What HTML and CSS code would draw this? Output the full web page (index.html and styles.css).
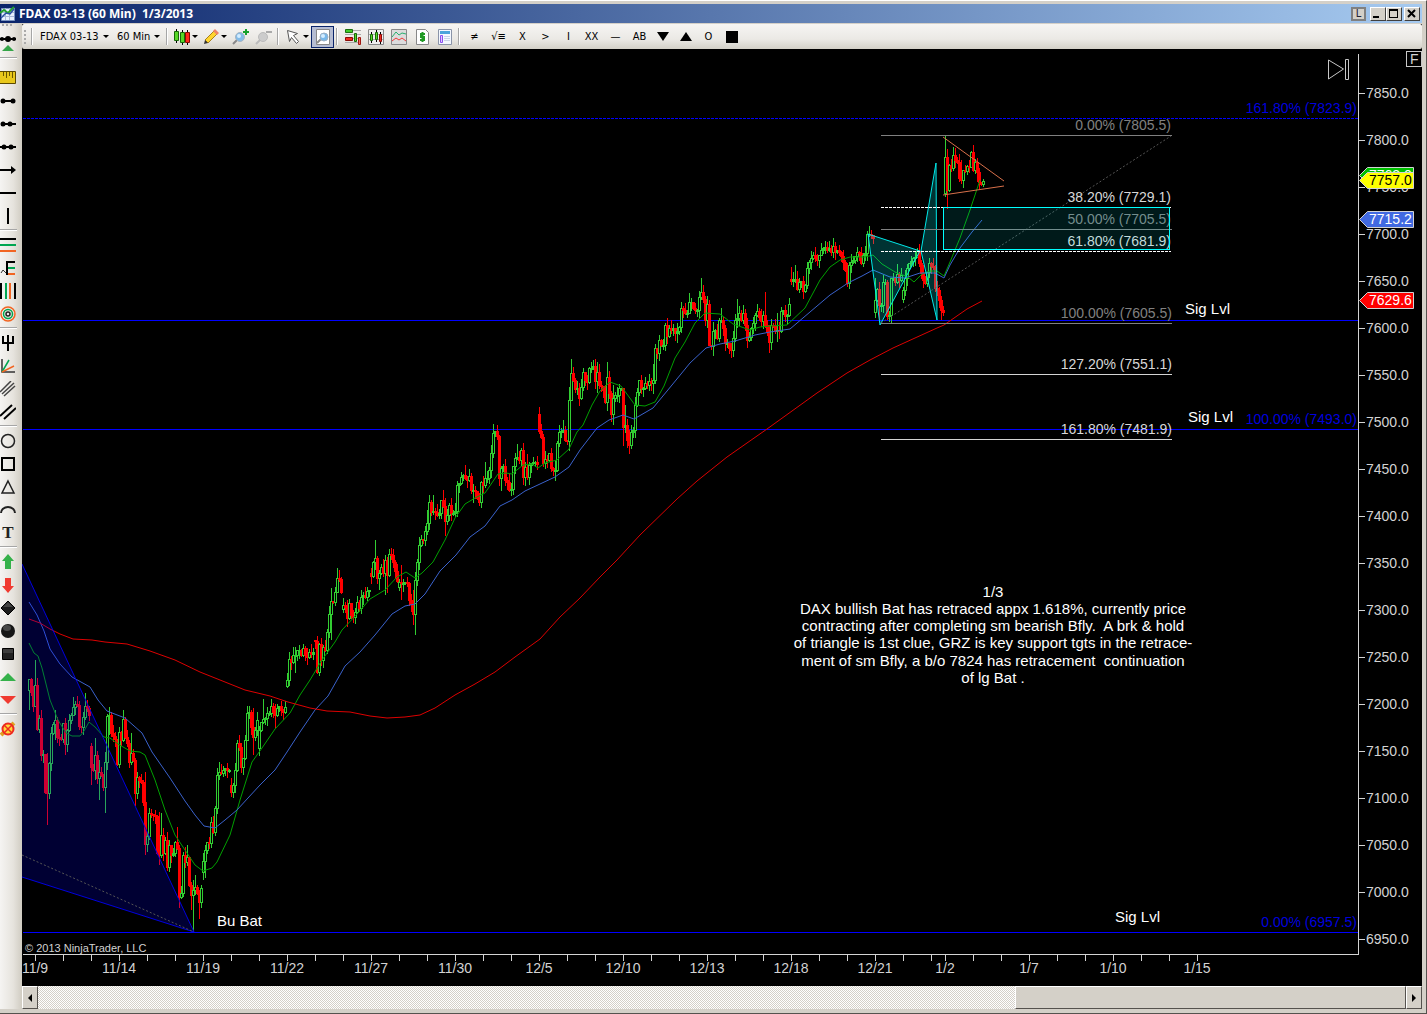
FILE: index.html
```html
<!DOCTYPE html>
<html lang="en">
<head>
  <meta charset="UTF-8" />
  <title>FDAX 03-13 (60 Min) 1/3/2013</title>
  <link rel="stylesheet" href="styles.css">
</head>
<body>
  <div class="window">
    <header class="titlebar">
      <svg class="app-icon" viewBox="0 0 16 16" width="16" height="16"><path fill="#e8f0ff" stroke="#7a94c0" d="M1.500 2.500h13v12h-13z"/><path stroke="#a8b8d8" fill="none" d="M1 6.500h13M1 10.500h13M5.500 2v12M9.500 2v12"/><path fill="none" stroke="#22a02c" stroke-width="2" d="M0 7l4-3 4 3 6-6"/><path fill="none" stroke="#2a4fa0" stroke-width="1.500" d="M1 12l5-5 4 1 4-5"/></svg>
      <h1>FDAX 03-13 (60 Min)&nbsp; 1/3/2013</h1>
      <div class="window-buttons">
        <button class="link-btn" aria-label="Link">L</button>
        <button aria-label="Minimize"><svg viewBox="0 0 12 10" width="12" height="10"><path d="M1 7h6v2H1z"/></svg></button>
        <button aria-label="Maximize"><svg viewBox="0 0 12 10" width="12" height="10"><path fill-rule="evenodd" d="M1 0h9v9H1zM2 2v6h7V2z"/></svg></button>
        <button class="close-btn" aria-label="Close"><svg viewBox="0 0 12 10" width="12" height="10"><path fill="none" stroke="#000" stroke-width="2" d="M2 1l7 7M9 1l-7 7"/></svg></button>
      </div>
    </header>

    <div class="workspace">
      <nav class="drawbar" aria-label="Drawing tools">
        <span class="grip-top"></span>
        <button class="more" aria-label="Scroll up"><svg viewBox="0 0 16 20" width="16" height="20"><path stroke="#000" stroke-width="2" d="M0 6h16"/><circle cx="8" cy="6" r="3"/><circle cx="2" cy="6" r="2"/><circle cx="14" cy="6" r="2"/><path fill="#35a548" d="M2 18l6-6 6 6z"/></svg></button>
        <hr>
        <button aria-label="Ruler"><svg viewBox="0 0 16 16" width="16" height="16"><path fill="#e9c81c" stroke="#5c4a00" d="M-1 1.500h16.500v12H-1z"/><path stroke="#6b5600" d="M3.500 2v4M6.500 2v6M9.500 2v4M12.500 2v6"/></svg></button>
        <button aria-label="Line"><svg viewBox="0 0 16 16" width="16" height="16"><path stroke="#000" stroke-width="2" d="M2 8h12"/><circle cx="3" cy="8" r="2.500"/><circle cx="13" cy="8" r="2.500"/></svg></button>
        <button aria-label="Ray"><svg viewBox="0 0 16 16" width="16" height="16"><path stroke="#000" stroke-width="2" d="M2 8h14"/><circle cx="3" cy="8" r="2.500"/><circle cx="10" cy="8" r="2.500"/></svg></button>
        <button aria-label="Extended line"><svg viewBox="0 0 16 16" width="16" height="16"><path stroke="#000" stroke-width="2" d="M0 8h16"/><circle cx="4" cy="8" r="2.500"/><circle cx="11" cy="8" r="2.500"/></svg></button>
        <button aria-label="Arrow line"><svg viewBox="0 0 16 16" width="16" height="16"><path stroke="#000" stroke-width="2" d="M0 8h13"/><path d="M11 4l5 4-5 4z"/></svg></button>
        <button aria-label="Horizontal line"><svg viewBox="0 0 16 16" width="16" height="16"><path d="M0 7h16v2H0z"/></svg></button>
        <button aria-label="Vertical line"><svg viewBox="0 0 16 16" width="16" height="16"><path d="M7 0h2v16H7z"/></svg></button>
        <hr>
        <button aria-label="Fibonacci retracements"><svg viewBox="0 0 16 16" width="16" height="16"><path d="M0 1h16v2H0z"/><path fill="#00a651" d="M0 7h16v2H0z"/><path fill="#f26522" d="M0 13h16v2H0z"/></svg></button>
        <button aria-label="Fibonacci extensions"><svg viewBox="0 0 16 16" width="16" height="16"><path fill="none" stroke="#333" d="M1 13l2-3 3 3"/><path d="M6 1h9v2H8v12H6z"/><path fill="#00a651" d="M8 7h7v2H8z"/><path fill="#f26522" d="M8 13h7v2H8z"/></svg></button>
        <button aria-label="Fibonacci time"><svg viewBox="0 0 16 16" width="16" height="16"><path d="M0 0h2v16H0zM14 0h2v16h-2z"/><path fill="#00a651" d="M5 0h2v16H5z"/><path fill="#f26522" d="M9 0h2v16H9z"/></svg></button>
        <button aria-label="Fibonacci circle"><svg viewBox="0 0 16 16" width="16" height="16" fill="none" stroke-width="1.500"><circle cx="8" cy="8" r="7" stroke="#f26522"/><circle cx="8" cy="8" r="4.500" stroke="#00a651"/><circle cx="8" cy="8" r="2" stroke="#222"/></svg></button>
        <hr>
        <button aria-label="Andrews pitchfork"><svg viewBox="0 0 16 16" width="16" height="16"><path d="M2 1h2v6h3V0h2v7h3V1h2v8H9v7H7V9H2z"/></svg></button>
        <button aria-label="Gann fan"><svg viewBox="0 0 16 16" width="16" height="16" fill="none" stroke-width="1.500"><path stroke="#333" d="M2 1v13h13"/><path stroke="#00a651" d="M2 14L9 2"/><path stroke="#f26522" d="M2 14l12-6"/></svg></button>
        <button aria-label="Regression channel"><svg viewBox="0 0 16 16" width="16" height="16"><path stroke="#444" stroke-width="1.500" d="M0 11L11 0M2 13L14 2M4 15L15 5"/></svg></button>
        <button aria-label="Trend channel"><svg viewBox="0 0 16 16" width="16" height="16"><path stroke="#000" stroke-width="2" d="M0 12L12 1M4 15L16 4"/></svg></button>
        <hr>
        <button aria-label="Ellipse"><svg viewBox="0 0 16 16" width="16" height="16"><circle cx="8" cy="8" r="6.500" fill="none" stroke="#222" stroke-width="1.500"/></svg></button>
        <button aria-label="Rectangle"><svg viewBox="0 0 16 16" width="16" height="16"><path fill="none" stroke="#000" stroke-width="2" d="M2 2h12v12H2z"/></svg></button>
        <button aria-label="Triangle"><svg viewBox="0 0 16 16" width="16" height="16"><path fill="none" stroke="#222" stroke-width="1.500" d="M8 2l6 12H2z"/></svg></button>
        <button aria-label="Arc"><svg viewBox="0 0 16 16" width="16" height="16"><path fill="none" stroke="#222" stroke-width="2" d="M1 11a7 6 0 0 1 14 0"/></svg></button>
        <button class="text-tool" aria-label="Text">T</button>
        <hr>
        <button aria-label="Arrow up"><svg viewBox="0 0 16 16" width="16" height="16"><path fill="#35b14a" d="M8 0l6 7h-3v8H5V7H2z"/></svg></button>
        <button aria-label="Arrow down"><svg viewBox="0 0 16 16" width="16" height="16"><path fill="#f03a30" d="M8 16l6-7h-3V1H5v8H2z"/></svg></button>
        <button aria-label="Diamond"><svg viewBox="0 0 16 16" width="16" height="16"><path fill="#1c1c1c" stroke="#000" d="M8 1l7 7-7 7-7-7z"/><path fill="#444" d="M8 2l5 5H3z"/></svg></button>
        <button aria-label="Dot"><svg viewBox="0 0 16 16" width="16" height="16"><circle cx="8" cy="8" r="7" fill="#161616"/><ellipse cx="7" cy="5" rx="4" ry="3" fill="#484848"/></svg></button>
        <button aria-label="Square"><svg viewBox="0 0 16 16" width="16" height="16"><path fill="#222" stroke="#000" d="M2.500 2.500h11v11h-11z"/><path fill="#3e3e3e" d="M3 3h10v4H3z"/></svg></button>
        <button aria-label="Triangle up"><svg viewBox="0 0 16 16" width="16" height="16"><path fill="#35b14a" d="M0 12l8-8 8 8z"/></svg></button>
        <button aria-label="Triangle down"><svg viewBox="0 0 16 16" width="16" height="16"><path fill="#f03a30" d="M0 4l8 8 8-8z"/></svg></button>
        <hr>
        <button aria-label="Remove drawings"><svg viewBox="0 0 16 16" width="16" height="16"><path stroke="#e0a020" stroke-width="4" d="M1 14L14 2"/><circle cx="8" cy="8" r="5.500" fill="#ffd83a" stroke="#ee2a20" stroke-width="2"/><path stroke="#ee2a20" stroke-width="1.500" d="M4 4l8 8M4 12l8-8"/></svg></button>
      </nav>

      <main class="chart-pane">
        <div class="toolbar">
          <span class="grip"></span>
          <span class="sep"></span>
          <label class="pick instrument"><select aria-label="Instrument"><option>FDAX 03-13</option></select></label>
          <label class="pick interval"><select aria-label="Interval"><option>60 Min</option></select></label>
          <span class="sep"></span>
          <button class="drop" aria-label="Chart style"><svg viewBox="0 0 16 16" width="16" height="16"><path stroke="#000" d="M2.500 0v14M8.500 1v15M13.500 1v15"/><path fill="#58d828" stroke="#176a08" d="M.5 2.500h4v9h-4zM6.500 3.500h4v10h-4z"/><path fill="#ff2a1c" stroke="#8a0a04" d="M11.500 3.500h4v10h-4z"/></svg></button>
          <button class="drop" aria-label="Drawing tools"><svg viewBox="0 0 16 16" width="16" height="16"><path fill="#ffd52e" stroke="#a8801a" d="M2 11L11 2l3 3-9 9z"/><path fill="#f0846a" d="M10 2l2-2 4 4-2 2z"/><path fill="#333" d="M1 15l1-4 3 3z"/></svg></button>
          <button aria-label="Zoom in"><svg viewBox="0 0 18 16" width="18" height="16"><path stroke="#888" stroke-width="2" d="M1 15l5-5"/><circle cx="8" cy="8" r="4.500" fill="#83bce8" stroke="#a8b4c0"/><circle cx="7" cy="7" r="2" fill="#d4edff"/><path fill="#16a02c" d="M13 0h2v2h2v2h-2v2h-2V4h-2V2h2z"/></svg></button>
          <button aria-label="Zoom out" disabled><svg viewBox="0 0 18 16" width="18" height="16"><path stroke="#bbb" stroke-width="2" d="M1 15l5-5"/><circle cx="8" cy="8" r="4.500" fill="#ccc" stroke="#bbb"/><path fill="#aaa" d="M11 2h6v2h-6z"/></svg></button>
          <span class="sep"></span>
          <button class="drop" aria-label="Pointer"><svg viewBox="0 0 16 16" width="16" height="16"><path fill="#fff" stroke="#555" d="M2.500 1.500l10 3-4 2 5 6-2 2-5-6-2 4z"/></svg></button>
          <button class="active" aria-label="Data box"><svg viewBox="0 0 16 16" width="16" height="16"><path fill="#fff" stroke="#888" d="M1.500.5h13v15h-13z"/><path stroke="#888" stroke-width="2" d="M2 14l4-4"/><circle cx="9" cy="8" r="4" fill="#78b8ea" stroke="#9ab0c4"/><circle cx="8" cy="7" r="2" fill="#d4edff"/></svg></button>
          <span class="sep"></span>
          <button aria-label="Chart trader"><svg viewBox="0 0 16 16" width="16" height="16"><path stroke="#aaa" d="M0 1.500h16M0 5.500h16M0 9.500h16M0 13.500h16"/><path fill="#3fca28" stroke="#1c7010" d="M.5.5h7v3h-7z"/><path fill="#f02a20" stroke="#8a0a04" d="M.5 8.500h7v3h-7z"/><path fill="#58d828" stroke="#176a08" d="M9.500 4.500h2v8h-2z"/><path fill="#f46a60" stroke="#a01810" d="M13.500 8.500h2v7h-2z"/></svg></button>
          <button aria-label="Data series"><svg viewBox="0 0 16 16" width="16" height="16"><path fill="#eee" stroke="#888" d="M.5.5h15v15H.5z"/><path stroke="#aaa" d="M1 5.500h14M1 10.500h14"/><path stroke="#000" d="M3.500 3v11M8.500 1v12M12.500 3v12"/><path fill="#58d828" stroke="#176a08" d="M2.500 5.500h2v6h-2zM7.500 3.500h2v7h-2z"/><path fill="#f02a20" stroke="#8a0a04" d="M11.500 5.500h2v7h-2z"/></svg></button>
          <button aria-label="Indicators"><svg viewBox="0 0 16 16" width="16" height="16"><path fill="#dcdcdc" stroke="#888" d="M.5.5h15v15H.5z"/><path fill="none" stroke="#28b070" d="M1 8l4-5 3 3 3-2 4 1"/><path fill="none" stroke="#f03a3a" d="M1 12l4-3 3 2 3-2 4 3"/></svg></button>
          <button aria-label="Strategies"><svg viewBox="0 0 16 16" width="16" height="16"><path fill="#fff" stroke="#888" d="M2.500.5h9l3 3v12h-12z"/><path fill="none" stroke="#219a24" stroke-width="2" d="M11 5H7v3h3v3H6M8.500 3v10"/></svg></button>
          <button aria-label="Properties"><svg viewBox="0 0 16 16" width="16" height="16"><path fill="#f4f8ff" stroke="#8a94a8" d="M1.500.5h13v15h-13z"/><path fill="#4aa4dc" d="M3 2h10v3H3z"/><path fill="#e0ccff" stroke="#8a50f0" d="M3.500 6.500h2v7h-2z"/><path stroke="#c8d4e8" d="M7 7.500h6M7 9.500h6M7 11.500h6"/></svg></button>
          <span class="sep"></span>
          <button>≠</button>
          <button class="wide">√≡</button>
          <button>X</button>
          <button>&gt;</button>
          <button>I</button>
          <button>XX</button>
          <button class="wide">—</button>
          <button>AB</button>
          <button aria-label="Triangle down marker"><svg viewBox="0 0 12 12" width="12" height="12"><path d="M0 1h12l-6 9z"/></svg></button>
          <button aria-label="Triangle up marker"><svg viewBox="0 0 12 12" width="12" height="12"><path d="M0 10h12L6 1z"/></svg></button>
          <button>O</button>
          <button aria-label="Square marker"><svg viewBox="0 0 12 12" width="12" height="12"><path d="M0 0h12v12H0z"/></svg></button>
        </div>

        <svg class="chart" viewBox="22 49 1400 937" role="img" aria-label="FDAX 60 minute price chart">
          <g class="crisp">
            <path class="level dashed" d="M23 118.500H1358"/>
            <path class="level" d="M23 320.500H1358M23 429.500H1358M23 932.500H1358"/>
          </g>

          <g id="candles" class="crisp"></g>
          <g id="averages"></g>

          <!-- large bat -->
          <polygon class="bat" points="22,564 194,932 22,877"/>
          <path class="bat-edge" d="M22 564L194 932L22 877"/>
          <path class="dotted" d="M22 855L194 932"/>

          <!-- small butterfly -->
          <polygon class="butterfly" points="868,234 880,325 920,251"/>
          <polygon class="butterfly" points="921,251 936,163 937,320"/>

          <!-- retracement of the butterfly -->
          <path class="dotted" d="M881 323L1171 136"/>
          <g class="crisp">
            <path class="fib dim" d="M881 135.500H1172M881 229.500H1172M881 323.500H1172"/>
            <path class="fib" d="M881 374.500H1172M881 439.500H1172"/>
            <path class="fib dash" d="M881 207.500H1171M881 251.500H1171"/>
          </g>
          <g class="fib-label">
            <text class="dim" x="1171" y="130">0.00% (7805.5)</text>
            <text x="1171" y="202">38.20% (7729.1)</text>
            <text class="dim" x="1171" y="224">50.00% (7705.5)</text>
            <text x="1171" y="246">61.80% (7681.9)</text>
            <text class="dim" x="1172" y="318">100.00% (7605.5)</text>
            <text x="1172" y="369">127.20% (7551.1)</text>
            <text x="1172" y="434">161.80% (7481.9)</text>
            <text class="blue" x="1357" y="113">161.80% (7823.9)</text>
            <text class="blue" x="1357" y="424">100.00% (7493.0)</text>
            <text class="blue" x="1357" y="927">0.00% (6957.5)</text>
          </g>
          <rect class="zone crisp" x="943.500" y="207.500" width="226" height="42"/>
          <path class="wedge" d="M943 137L1004 181M943 195L1004 186"/>

          <g class="note">
            <text x="1185" y="314">Sig Lvl</text>
            <text x="1188" y="422">Sig Lvl</text>
            <text x="1115" y="922">Sig Lvl</text>
            <text x="217" y="926">Bu Bat</text>
          </g>
          <g class="note centered">
            <text x="993" y="597">1/3</text>
            <text x="993" y="614">DAX bullish Bat has retraced appx 1.618%, currently price</text>
            <text x="993" y="631">contracting after completing sm bearish Bfly.&nbsp; A brk &amp; hold</text>
            <text x="993" y="648">of triangle is 1st clue, GRZ is key support tgts in the retrace-</text>
            <text x="993" y="666">ment of sm Bfly, a b/o 7824 has retracement&nbsp; continuation</text>
            <text x="993" y="683">of lg Bat .</text>
          </g>
          <text class="copyright" x="25" y="952">© 2013 NinjaTrader, LLC</text>

          <g id="axes"></g>
          <g id="tags"></g>

          <g class="marker" aria-label="Go to last bar">
            <path d="M1328.500 60v19l15-10zM1345.500 59.500h3v20h-3z"/>
          </g>
          <g class="marker">
            <rect class="crisp" x="1406.500" y="51.500" width="15" height="15"/>
            <text x="1410" y="64">F</text>
          </g>
        </svg>

        <div class="scrollbar">
          <button aria-label="Scroll left"><svg viewBox="0 0 8 8" width="8" height="8"><path d="M6 0v8L2 4z"/></svg></button>
          <div class="track"><div class="thumb"></div></div>
          <button aria-label="Scroll right"><svg viewBox="0 0 8 8" width="8" height="8"><path d="M2 0v8l4-4z"/></svg></button>
        </div>
      </main>
    </div>
  </div>
  <script src="chart.js"></script>
</body>
</html>
```
FILE: styles.css
```css
* {
  box-sizing: border-box;
}

body {
  margin: 0;
  background: #d4d0c8;
  font-family: "DejaVu Sans Condensed", "DejaVu Sans", sans-serif;
  font-size: 11px;
  color: #000;
}

button {
  margin: 0;
  padding: 0;
  border: 0;
  background: none;
  font: inherit;
  color: inherit;
}

svg {
  display: block;
}

.window {
  min-height: 100vh;
  display: flex;
  flex-direction: column;
  padding: 3px 4px 4px 0;
  border-top: 1px solid #fff;
  border-right: 1px solid #55524e;
  border-bottom: 1px solid #55524e;
  background: #d4d0c8;
}

/* title bar */
.titlebar {
  height: 19px;
  display: flex;
  align-items: center;
  gap: 3px;
  padding-right: 2px;
  background: linear-gradient(to right, #0a246a, #a6caf0);
  color: #fff;
}

.titlebar h1 {
  flex: 1;
  margin: 0;
  font-family: "Noto Sans", sans-serif;
  font-size: 12px;
  font-weight: 700;
}

.window-buttons {
  display: flex;
}

.window-buttons button {
  width: 16px;
  height: 14px;
  display: flex;
  align-items: center;
  justify-content: center;
  background: #d4d0c8;
  border: 1px solid;
  border-color: #fff #404040 #404040 #fff;
  color: #223;
}

.window-buttons .link-btn {
  width: 15px;
  margin-right: 4px;
  border: 2px solid #808080;
}

.window-buttons .close-btn {
  margin-left: 2px;
}

.workspace {
  flex: 1;
  display: flex;
  padding-top: 1px;
}

/* drawing tools */
.drawbar {
  width: 22px;
  flex: none;
  display: flex;
  flex-direction: column;
  padding-right: 5px;
  background: linear-gradient(to right, #f5f4f2, #e6e3dd 60%, #d0ccc2);
}

.drawbar button {
  width: 16px;
  height: 23px;
  display: flex;
  align-items: center;
}

.drawbar .more {
  height: 24px;
}

.drawbar hr {
  width: 17px;
  height: 2px;
  margin: 2px 0;
  border: 0;
  border-top: 1px solid #a6a6a6;
  background: #fff;
}

.drawbar .more + hr {
  margin: 2px 0 7px;
}

.drawbar .text-tool {
  justify-content: center;
  font: bold 17px "Liberation Serif", serif;
  color: #222;
}

.grip-top {
  height: 7px;
  margin-left: 2px;
  border-top: 2px dotted #aaa;
  width: 10px;
}

.chart-pane {
  flex: 1;
  min-width: 0;
  display: flex;
  flex-direction: column;
  background: #000;
}

/* toolbar */
.toolbar {
  height: 25px;
  display: flex;
  align-items: center;
  padding-left: 2px;
  background: linear-gradient(#f6f5f3, #ebe9e5 60%, #d3d0c7);
  border-radius: 2px;
}

.toolbar button {
  min-width: 23px;
  height: 22px;
  display: flex;
  align-items: center;
  justify-content: center;
}

.toolbar .active {
  background: #b6bdd2;
  border: 1px solid #0a246a;
}

.toolbar .wide {
  width: 25px;
}

.toolbar .drop {
  width: 29px;
  gap: 2px;
}

.drop::after,
.pick::after {
  content: "";
  border: 3px solid transparent;
  border-top-color: #000;
  border-bottom: 0;
}

.pick {
  display: flex;
  align-items: center;
}

.pick select {
  appearance: none;
  border: 0;
  padding: 0;
  background: none;
  font: inherit;
  color: #000;
}

.instrument {
  margin-left: 4px;
}

.instrument select {
  width: 63px;
}

.interval {
  margin: 0 4px 0 8px;
}

.interval select {
  width: 37px;
}

.sep {
  width: 2px;
  height: 17px;
  margin: 0 3px 0 2px;
  border-left: 1px solid #a6a6a6;
  background: #fff;
}

.grip {
  width: 5px;
  height: 14px;
  border-left: 2px dotted #aaa;
}

/* chart */
.chart {
  width: 100%;
  height: auto;
  background: #000;
  font-family: "Liberation Sans", Arial, sans-serif;
  font-size: 14px;
}

.crisp {
  shape-rendering: crispEdges;
}

.level {
  stroke: #0000ff;
}

.dashed {
  stroke-dasharray: 3 1;
}

.up {
  fill: #32cd32;
}

.down {
  fill: #ff0000;
}

.hollow {
  fill: #000;
}

.avg {
  fill: none;
}

.avg.fast {
  stroke: #00a000;
}

.avg.mid {
  stroke: #3a62cc;
}

.avg.slow {
  stroke: #dd0000;
}

.bat {
  fill: rgba(0, 0, 255, 0.2);
}

.bat-edge {
  fill: none;
  stroke: #0000dd;
}

.dotted {
  stroke: #555;
  stroke-dasharray: 2 2;
}

.butterfly {
  fill: rgba(0, 255, 255, 0.2);
  stroke: #00e8e8;
}

.fib {
  stroke: #d3d3d3;
}

.fib.dim {
  stroke: #808080;
}

.fib.dash {
  stroke: #fff;
  stroke-dasharray: 3 1;
}

.fib-label {
  fill: #d8d8d8;
  text-anchor: end;
}

.fib-label .dim {
  fill: #808080;
}

.fib-label .blue {
  fill: #0000dd;
}

.zone {
  fill: rgba(0, 255, 255, 0.1);
  stroke: #00ffff;
}

.wedge {
  stroke: #d8704a;
}

.note {
  fill: #fff;
  font-size: 15px;
}

.centered {
  text-anchor: middle;
}

.copyright {
  fill: #d3d3d3;
  font-size: 11px;
}

.axis-line {
  fill: none;
  stroke: #d3d3d3;
  shape-rendering: crispEdges;
}

.axis-label {
  fill: #d3d3d3;
}

.tag {
  stroke: #d3d3d3;
}

.marker {
  fill: none;
  stroke: #c8c8c8;
}

.marker text {
  fill: #d3d3d3;
  stroke: none;
}

/* scrollbar */
.scrollbar {
  flex: 1;
  min-height: 23px;
  display: flex;
  background: #d4d0c8;
}

.scrollbar button,
.thumb {
  background: #d4d0c8;
  border: 1px solid;
  border-color: #fff #55524e #55524e #fff;
}

.scrollbar button {
  width: 16px;
  display: flex;
  align-items: center;
  justify-content: center;
}

.track {
  flex: 1;
  display: flex;
  justify-content: flex-end;
  background: repeating-conic-gradient(#fff 0 25%, #d4d0c8 0 50%) 0 0 / 2px 2px;
}

.thumb {
  width: calc(100% * 2 / 7);
}
```
FILE: chart.js
```js
const NS = "http://www.w3.org/2000/svg";

function add(parent, name, attrs, text) {
  const el = document.createElementNS(NS, name);
  for (const key in attrs) el.setAttribute(key, attrs[key]);
  if (text) el.textContent = text;
  parent.appendChild(el);
  return el;
}

// each session: first bar x, opening level, then the close of every bar
const sessions = [
  [29, 690, 679, 692, 706, 685, 729, 718, 755, 754, 792, 793, 763, 733, 724, 720, 737, 738, 739, 723, 744, 730, 720, 715, 707, 704, 705, 726, 727, 717, 706, 708, 715],
  [91, 746, 767, 770, 755, 778, 772, 775, 787, 762, 716, 715, 733, 736, 739, 764, 732, 740, 719, 737, 743, 762, 753, 760, 793, 777, 780, 782, 802, 844, 836, 813, 814, 815, 816, 853, 855, 835, 853, 840, 867, 845, 855, 853, 842, 848, 897, 893, 855, 862, 857, 885, 895, 890, 887, 893, 902, 888],
  [203, 872, 861, 850, 842, 843, 822, 832, 808, 775, 772, 773, 770, 768, 770, 770],
  [231, 785, 792, 785, 770, 743, 747, 767, 758, 740, 713, 712, 727, 737, 730, 720],
  [259, 748, 730, 722, 719, 718, 713, 713, 706, 712, 715, 708, 706, 710, 712, 707],
  [287, 686, 680, 659, 662, 655, 655, 650, 650, 655, 648, 655, 657, 652, 654, 652],
  [315, 640, 641, 672, 644, 660, 647, 650, 632, 614, 601, 602, 592, 578, 579, 592],
  [343, 609, 605, 607, 618, 603, 615, 617, 612, 602, 608, 597, 595, 597, 591, 590],
  [371, 573, 576, 562, 558, 578, 573, 567, 573, 560, 575, 554, 555, 562, 571, 581],
  [399, 587, 582, 583, 583, 582, 583, 600, 604, 614, 580, 562, 545, 539, 540, 531, 523, 502, 512, 511, 512, 515, 513, 500, 506, 521, 515, 505, 513, 513, 511, 485, 483, 477, 475, 478, 480, 476, 490, 490, 491, 498, 502, 482, 485, 478, 478, 470, 453, 433, 431, 436, 478, 468, 466, 480, 482, 490, 489, 466, 458, 457, 460, 450, 477, 467, 477, 465, 463, 462, 462, 464],
  [539, 414, 431, 437, 463, 459, 460, 453, 468, 470, 470, 443, 432, 431, 430, 440, 441, 400, 373, 380, 389, 388, 398, 387, 372, 380, 382, 368, 368, 366, 381, 372, 385, 386, 390, 402, 377, 393, 414, 398, 395, 395, 388, 388, 427, 425, 440, 445, 432, 430, 405, 392, 380, 388, 388, 383, 385, 381, 383, 380, 348, 353, 340, 345, 345, 325, 336, 328, 330, 328, 333, 331, 327, 308, 310, 313, 313, 302, 302, 308, 310, 310, 297, 292, 299, 320, 304, 345, 346, 331, 330, 338, 320, 320, 328, 343, 343, 348, 350, 338, 320, 318, 313, 320, 313, 325, 340, 337, 328, 323, 315, 311, 317, 321, 315, 325, 332, 342, 325, 326, 330, 330, 331, 311, 310, 316, 315, 304],
  [791, 279, 281, 279, 279, 289, 282, 281, 291, 285, 268, 262, 258, 255, 258, 260, 255, 250, 248, 247, 250, 248, 252, 246, 252, 250, 252, 256, 262, 270, 283, 265, 262, 260, 256, 252, 253, 263, 255, 253, 234, 234, 235, 238],
  [875, 312, 300, 289, 305, 305, 282, 282, 316, 315, 278, 278, 282, 274, 280, 275],
  [903, 299, 290, 278, 268, 263, 261, 258, 257, 251, 263, 273, 280, 283, 272, 263, 266, 267, 288, 290, 300, 310, 312],
  [945, 193, 157, 190, 165, 168, 155, 160, 162, 178, 180, 170, 171, 166, 167, 152, 170, 162, 172, 182, 184, 181]
];

// long shadows, x: [high, low]
const shadows = {
  29: [679, 710], 35: [660, 690], 47: [753, 825], 55: [710, 740], 65: [718, 755], 73: [697, 716], 85: [693, 720],
  91: [743, 785], 95: [738, 780], 99: [760, 800], 105: [752, 813], 109: [707, 735], 123: [710, 742], 131: [733, 765],
  135: [758, 806], 145: [772, 855], 149: [808, 840], 159: [812, 865], 161: [813, 858], 169: [840, 872], 177: [827, 850],
  179: [845, 908], 187: [845, 866], 191: [882, 910], 193: [880, 931], 195: [875, 895], 199: [890, 919], 205: [845, 878],
  211: [817, 848], 219: [762, 780], 231: [778, 797], 247: [706, 725], 253: [708, 755], 263: [699, 724], 275: [704, 729],
  287: [673, 688], 295: [647, 673], 303: [644, 657], 331: [588, 640], 337: [568, 593], 339: [570, 582], 347: [600, 627],
  355: [608, 624], 375: [540, 570], 379: [570, 590], 385: [555, 595], 387: [557, 593], 391: [548, 560], 401: [565, 600],
  413: [590, 625], 415: [572, 635], 427: [510, 535], 429: [495, 530], 433: [495, 515], 443: [490, 508], 445: [498, 536],
  465: [465, 480], 473: [484, 503], 485: [462, 488], 493: [424, 458], 497: [425, 440], 501: [466, 491], 511: [483, 496],
  517: [444, 460], 525: [462, 486], 527: [454, 480], 529: [462, 485], 539: [407, 434], 555: [460, 481], 563: [420, 433],
  569: [387, 451], 571: [359, 400], 579: [383, 406], 593: [360, 370], 597: [362, 393], 607: [362, 411], 613: [385, 425],
  623: [390, 446], 625: [405, 433], 629: [430, 454], 653: [364, 394], 677: [323, 343], 689: [293, 313], 701: [278, 300],
  709: [300, 346], 713: [322, 356], 721: [308, 323], 725: [325, 351], 733: [331, 357], 737: [299, 328], 747: [318, 348],
  765: [292, 328], 769: [325, 353], 777: [313, 342], 791: [267, 285], 795: [265, 283], 821: [243, 254], 827: [242, 253],
  875: [278, 318], 879: [282, 320], 887: [280, 320], 897: [264, 284], 917: [248, 256], 933: [258, 270], 941: [296, 320],
  945: [136, 197], 947: [149, 209], 953: [147, 171], 961: [160, 184], 971: [151, 168], 977: [158, 182], 983: [179, 187]
};

const candles = document.getElementById("candles");
for (const [start, open, ...closes] of sessions) {
  let prev = open;
  closes.forEach((close, i) => {
    const x = start + i * 2;
    const top = Math.min(prev, close);
    const height = Math.max(Math.abs(close - prev), 1) + 1;
    const extreme = shadows[x] || [top - (x * 7) % 9, top + height + (x * 5) % 8];
    const high = Math.min(extreme[0], top);
    const low = Math.max(extreme[1], top + height);
    const color = close <= prev ? "up" : "down";
    add(candles, "rect", { class: color, x: x, y: high, width: 1, height: low - high });
    add(candles, "rect", { class: color, x: x - 1, y: top, width: 3, height: height });
    if (color === "up" && height > 3) {
      add(candles, "rect", { class: "hollow", x: x, y: top + 1, width: 1, height: height - 2 });
    }
    prev = close;
  });
}

const averages = {
  fast: "29,643 34,653 38,656 42,668 50,700 58,720 66,733 72,736 80,736 84,731 89,722 95,727 104,737 110,738 118,744 130,751 140,752 145,755 155,780 165,810 175,835 185,850 195,865 203,871 212,868 217,862 230,835 240,800 252,762 262,748 275,729 290,713 300,695 310,680 322,660 335,642 342,630 358,613 370,599 385,590 397,577 406,572 415,578 422,573 433,562 445,540 455,518 465,504 475,498 485,493 498,474 506,473 512,474 523,465 532,464 538,468 545,463 557,460 569,449 577,432 583,425 592,405 600,391 610,382 621,386 635,405 645,406 655,402 664,386 675,358 685,342 695,323 705,313 720,314 733,324 750,330 760,327 770,326 787,325 805,308 820,280 830,267 840,260 850,257 865,257 873,255 882,264 895,272 908,277 914,282 922,274 930,271 937,271 944,276 950,262 960,238 970,210 980,180",
  mid: "29,602 37,615 44,631 50,649 60,664 72,677 90,687 98,700 107,711 125,718 142,733 152,752 170,778 185,801 195,815 204,826 215,828 225,820 237,810 248,798 260,785 275,770 287,752 300,732 315,710 328,696 345,666 360,652 375,635 392,614 405,606 415,604 425,594 440,571 456,555 470,537 485,526 500,506 512,500 525,491 540,484 555,477 569,467 580,450 597,428 609,420 623,415 634,419 653,408 672,385 690,363 706,348 720,344 735,341 755,335 770,332 790,329 810,312 830,295 848,283 862,276 873,270 890,277 905,278 920,273 935,273 944,278 950,265 960,248 972,232 982,220",
  slow: "29,619 40,623 50,629 60,634 73,639 92,640 105,642 127,644 150,651 175,660 200,672 225,682 245,690 270,696 288,702 310,708 327,711 350,712 370,716 387,718 405,717 420,715 435,708 455,695 475,684 495,672 515,657 540,639 560,617 580,598 600,577 617,560 640,535 677,499 697,481 727,457 767,429 817,393 847,373 870,360 893,348 937,328 944,325 967,309 982,301"
};
for (const name in averages) {
  add(document.getElementById("averages"), "polyline", { class: "avg " + name, points: averages[name] });
}

// axes
const axes = document.getElementById("axes");
add(axes, "path", { class: "axis-line", d: "M1358.5 54V954.5H23" });
for (let price = 7850; price >= 6950; price -= 50) {
  const y = 93 + (7850 - price) * 0.94;
  add(axes, "path", { class: "axis-line", d: `M1359 ${y + 0.5}h6` });
  add(axes, "text", { class: "axis-label", x: 1366, y: y + 5 }, price.toFixed(1));
}
const dates = ["11/9", "11/14", "11/19", "11/22", "11/27", "11/30", "12/5", "12/10", "12/13", "12/18", "12/21", "1/2", "1/7", "1/10", "1/15"];
for (let i = 0; i <= 42; i++) {
  // the last session of the year is only half as long
  const x = 35 + i * 28 - (i > 32 ? 14 : 0);
  add(axes, "path", { class: "axis-line", d: `M${x}.5 955v6` });
  if (i % 3 === 0) {
    add(axes, "text", { class: "axis-label centered", x: x, y: 973 }, dates[i / 3]);
  }
}

// price markers
const tags = document.getElementById("tags");
[
  [175, "#00c000", "#fff", "7763.0"],
  [180, "#ffff00", "#000", "7757.0"],
  [219, "#4169e1", "#fff", "7715.2"],
  [300, "#ff0000", "#fff", "7629.6"]
].forEach(([y, fill, color, label]) => {
  add(tags, "path", { class: "tag", fill: fill, d: `M1359.5 ${y + 0.5}l8-8h46v16h-46z` });
  add(tags, "text", { fill: color, x: 1369, y: y + 5 }, label);
});
```
